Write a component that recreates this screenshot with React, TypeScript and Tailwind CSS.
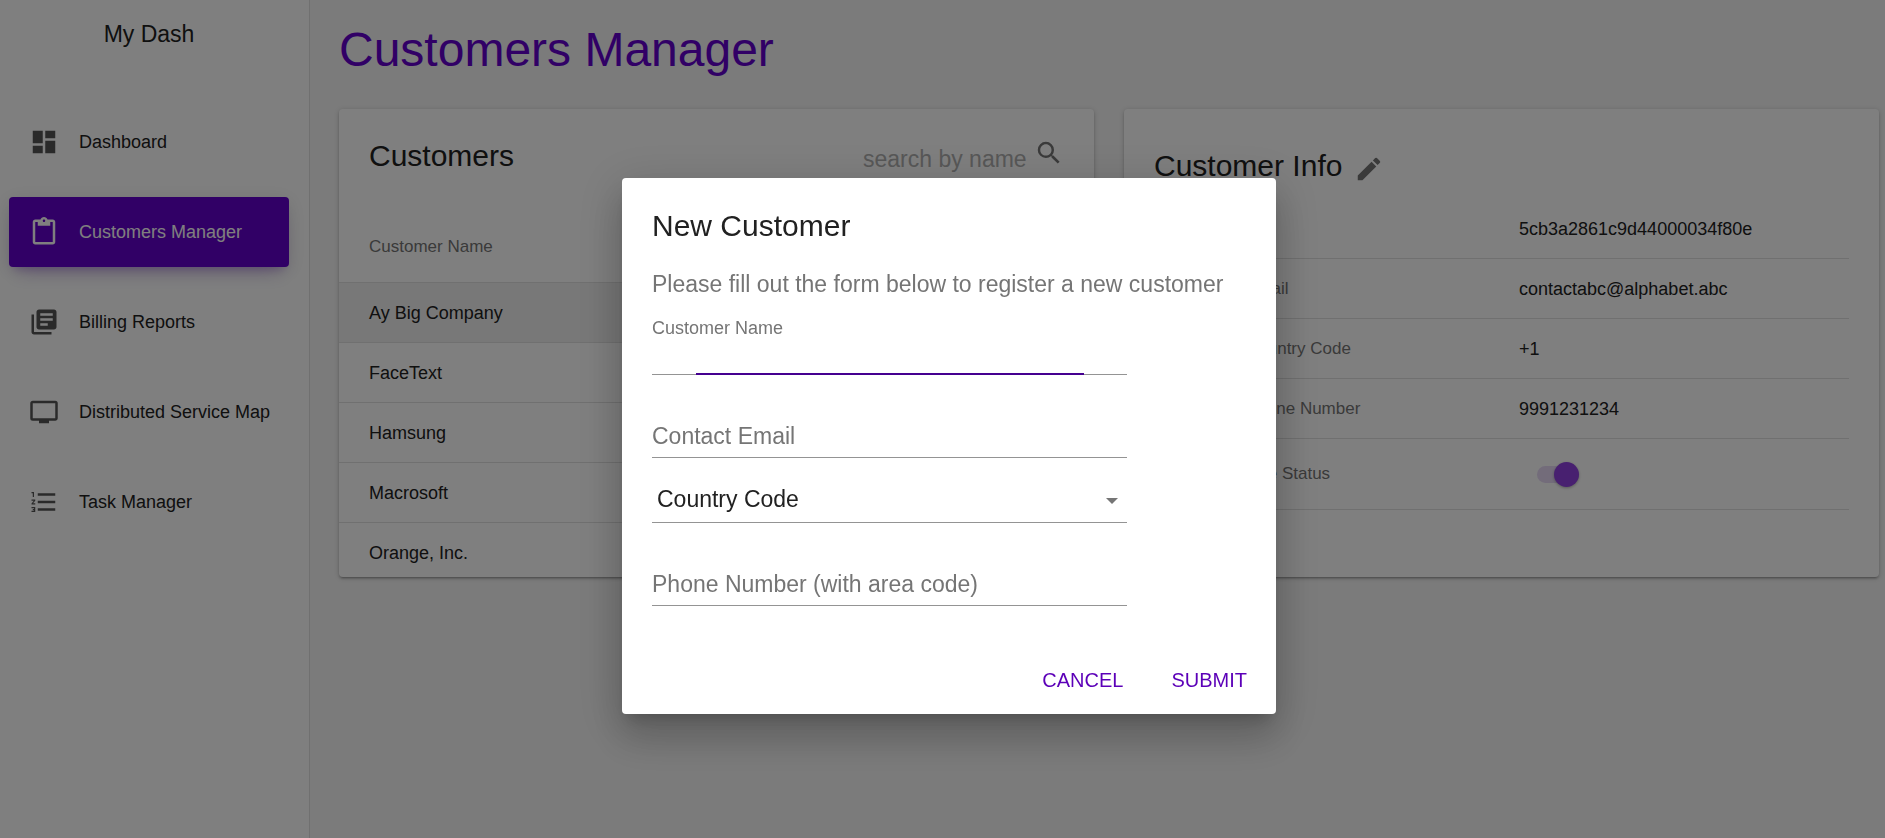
import type { ReactNode } from "react";
import type { IconType } from "react-icons";
import {
  MdContentPaste,
  MdDashboard,
  MdEdit,
  MdFormatListNumbered,
  MdLibraryBooks,
  MdPersonalVideo,
  MdSearch,
} from "react-icons/md";

const navItems: { label: string; icon: IconType; active?: boolean }[] = [
  { label: "Dashboard", icon: MdDashboard },
  { label: "Customers Manager", icon: MdContentPaste, active: true },
  { label: "Billing Reports", icon: MdLibraryBooks },
  { label: "Distributed Service Map", icon: MdPersonalVideo },
  { label: "Task Manager", icon: MdFormatListNumbered },
];

const customers = ["Ay Big Company", "FaceText", "Hamsung", "Macrosoft", "Orange, Inc."];

const cardShadow =
  "shadow-[0_1px_5px_0_rgba(0,0,0,0.2),0_2px_2px_0_rgba(0,0,0,0.14),0_3px_1px_-2px_rgba(0,0,0,0.12)]";

function Sidebar() {
  return (
    <aside className="w-[310px] shrink-0 border-r border-[#e0e0e0] bg-white pr-5 pl-[9px]">
      <div className="pt-4 pb-[55px] text-center text-[23px] leading-9">My Dash</div>
      <nav className="flex flex-col gap-5">
        {navItems.map(({ label, icon: Icon, active }) => (
          <a
            key={label}
            href="#"
            className={
              active
                ? "flex h-[70px] items-center gap-5 rounded bg-[#6200cc] pl-5 text-lg whitespace-nowrap text-white shadow-[0_12px_20px_-10px_rgba(98,0,204,0.28),0_4px_20px_0_rgba(0,0,0,0.12),0_7px_8px_-5px_rgba(98,0,204,0.2)]"
                : "flex h-[70px] items-center gap-5 rounded pl-5 text-lg whitespace-nowrap"
            }
          >
            <Icon className={active ? "size-[30px] shrink-0" : "size-[30px] shrink-0 text-[#555]"} />
            <span>{label}</span>
          </a>
        ))}
      </nav>
    </aside>
  );
}

function CustomersCard() {
  return (
    <section className={`h-[468px] overflow-hidden rounded bg-white ${cardShadow}`}>
      <div className="flex h-[101px] items-start justify-between px-[30px] pt-[29px]">
        <h2 className="text-3xl leading-9">Customers</h2>
        <div className="flex items-start gap-2">
          <input
            type="text"
            aria-label="search by name"
            placeholder="search by name"
            className="mt-[3px] h-9 w-[163px] bg-transparent text-[23px] outline-none placeholder:text-[#b0b0b0]"
          />
          <button type="button" aria-label="Search" className="text-[#757575]">
            <MdSearch className="size-[30px]" />
          </button>
        </div>
      </div>
      <table className="w-full border-separate border-spacing-0 text-left">
        <thead>
          <tr>
            <th className="h-[73px] border-b border-[#e0e0e0] px-[30px] pt-0.5 pb-0 text-[17px] font-normal text-[#757575]">
              Customer Name
            </th>
          </tr>
        </thead>
        <tbody>
          {customers.map((name, i) => (
            <tr key={name} className={i === 0 ? "bg-[#f0f0f0]" : ""}>
              <td className="h-[60px] border-b border-[#e0e0e0] px-[30px] py-0 text-lg">{name}</td>
            </tr>
          ))}
        </tbody>
      </table>
    </section>
  );
}

function InfoRow({ label, tall, children }: { label: string; tall?: boolean; children: ReactNode }) {
  return (
    <tr>
      <th
        className={`w-[365px] border-b border-[#e0e0e0] py-0 pl-[92px] text-[17px] font-normal text-[#757575] ${tall ? "h-[71px]" : "h-[60px]"}`}
      >
        {label}
      </th>
      <td className="border-b border-[#e0e0e0] py-0 text-lg">{children}</td>
    </tr>
  );
}

function CustomerInfoCard() {
  return (
    <section className={`h-[468px] rounded bg-white px-[30px] pt-[39px] ${cardShadow}`}>
      <div className="flex items-end gap-3">
        <h2 className="text-3xl leading-9">Customer Info</h2>
        <button type="button" aria-label="Edit customer" className="text-[#757575]">
          <MdEdit className="size-[30px]" />
        </button>
      </div>
      <table className="mt-[15px] w-full border-separate border-spacing-0 text-left">
        <tbody>
          <InfoRow label="ID">5cb3a2861c9d44000034f80e</InfoRow>
          <InfoRow label="Email">contactabc@alphabet.abc</InfoRow>
          <InfoRow label="Country Code">+1</InfoRow>
          <InfoRow label="Phone Number">9991231234</InfoRow>
          <InfoRow label="Live Status" tall>
            <label className="relative ml-[18px] flex h-[17px] w-[42px] items-center">
              <input type="checkbox" defaultChecked aria-label="Live Status" className="sr-only" />
              <span className="h-[17px] w-[42px] rounded-full bg-[#e6d9f5]" />
              <span className="absolute right-0 size-[25px] rounded-full bg-[#9040e0] shadow-[0_1px_3px_0_rgba(0,0,0,0.3)]" />
            </label>
          </InfoRow>
        </tbody>
      </table>
    </section>
  );
}

function NewCustomerDialog() {
  const field =
    "block h-11 w-full border-b border-[#949494] bg-transparent pt-0.5 text-[23px] outline-none placeholder:text-[#757575]";
  return (
    <div className="fixed inset-0 flex items-center justify-center bg-black/50 pt-[54px] pl-[13px]">
      <form
        role="dialog"
        aria-labelledby="dialog-title"
        className="w-[654px] rounded bg-white pt-7 pb-3 shadow-[0_11px_15px_-7px_rgba(0,0,0,0.2),0_24px_38px_3px_rgba(0,0,0,0.14),0_9px_46px_8px_rgba(0,0,0,0.12)]"
      >
        <div className="px-[30px]">
          <h2 id="dialog-title" className="text-3xl leading-10">
            New Customer
          </h2>
          <p className="mt-[22px] text-[23px] leading-8 text-[#757575]">
            Please fill out the form below to register a new customer
          </p>
          <div className="mt-4 w-[475px]">
            <label htmlFor="customer-name" className="block text-lg leading-6 text-[#757575]">
              Customer Name
            </label>
            <div className="relative">
              <input
                id="customer-name"
                type="text"
                className="block h-[35px] w-full border-b border-[#949494] bg-transparent text-[23px] outline-none"
              />
              <span className="absolute right-[43px] bottom-0 left-11 h-0.5 bg-[#450090]" />
            </div>
            <input
              type="email"
              aria-label="Contact Email"
              placeholder="Contact Email"
              className={`mt-[39px] ${field}`}
            />
            <div className="relative mt-[17px]">
              <select
                aria-label="Country Code"
                className="block h-12 w-full appearance-none border-b border-[#949494] bg-transparent pt-0.5 pl-[5px] text-[23px] outline-none"
              >
                <option>Country Code</option>
                <option>+1</option>
              </select>
              <svg
                viewBox="0 0 12 6"
                aria-hidden="true"
                className="pointer-events-none absolute top-[23px] right-[9px] h-1.5 w-3 fill-[#757575]"
              >
                <path d="M0 0h12L6 6z" />
              </svg>
            </div>
            <input
              type="tel"
              aria-label="Phone Number (with area code)"
              placeholder="Phone Number (with area code)"
              className={`mt-[39px] ${field}`}
            />
          </div>
        </div>
        <div className="mt-[52px] flex justify-end gap-2 pr-[9px] text-xl text-[#5c00b8]">
          <button type="button" className="h-11 px-5">
            CANCEL
          </button>
          <button type="button" className="h-11 px-5">
            SUBMIT
          </button>
        </div>
      </form>
    </div>
  );
}

export default function App() {
  return (
    <div className="flex min-h-screen bg-[#f6f6f6] font-['Liberation_Sans',Arial,sans-serif] text-[#212121]">
      <Sidebar />
      <main className="min-w-0 flex-1 pt-[22px] pr-1.5 pl-[29px]">
        <h1 className="text-5xl leading-[56px] text-[#6200cc]">Customers Manager</h1>
        <div className="mt-[31px] grid grid-cols-2 gap-[30px]">
          <CustomersCard />
          <CustomerInfoCard />
        </div>
      </main>
      <NewCustomerDialog />
    </div>
  );
}
